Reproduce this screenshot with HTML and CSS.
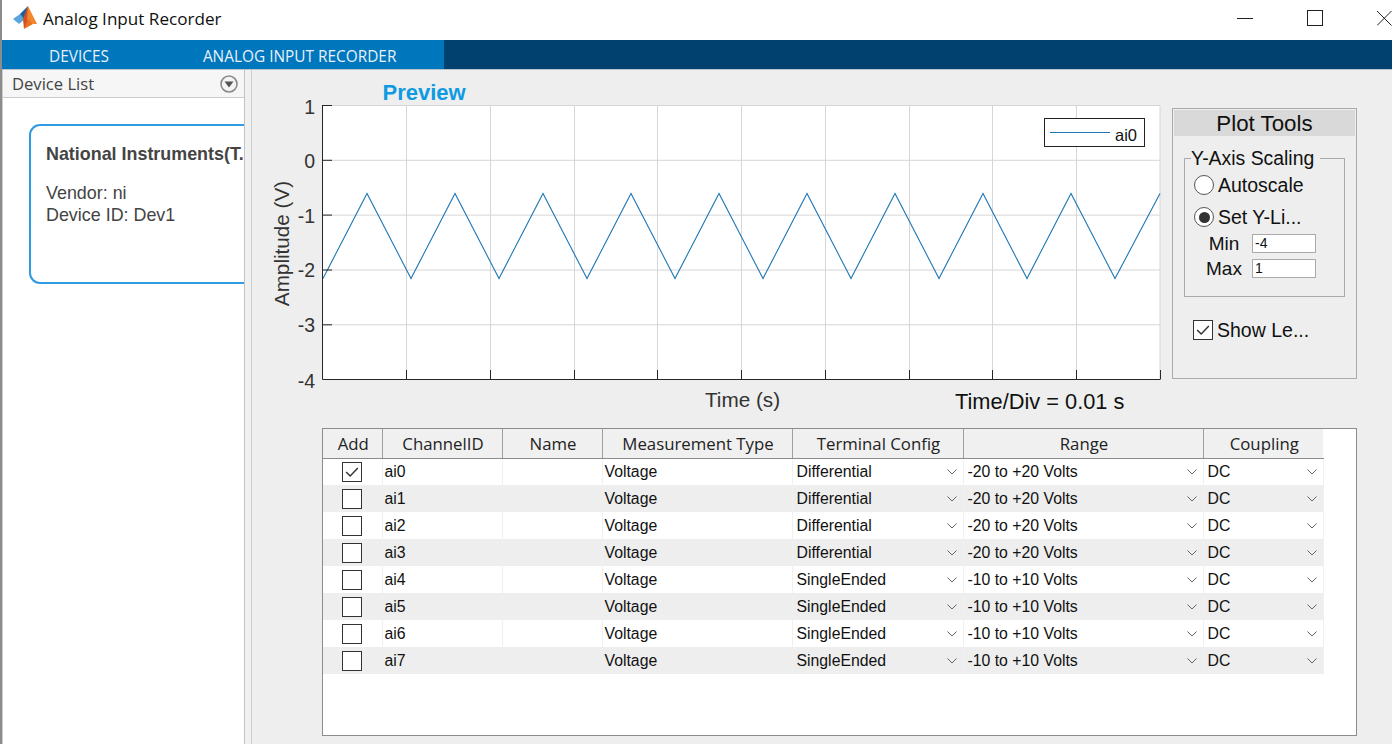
FILE: index.html
```html
<!DOCTYPE html>
<html lang="en">

<head>
    <meta charset="UTF-8">
    <title>Analog Input Recorder</title>
    <link rel="stylesheet" href="styles.css">
</head>

<body>
<svg class="defs">
    <symbol id="tick" viewBox="0 0 20 20"><path d="M3.5 10 L8 14.5 L16.5 5.5" fill="none" stroke="#333" stroke-width="1.6"/></symbol>
    <symbol id="chev" viewBox="0 0 12 8"><path d="M1.5 1.5 L6 6 L10.5 1.5" fill="none" stroke="#666" stroke-width="1"/></symbol>
</svg>

<div class="window">
    <div class="titlebar">
        <svg class="logo" viewBox="0 0 26 26" width="26" height="26">
            <path d="M1 15 L8 10 L13 15 L7 20 Z" fill="#5aa6dc"/>
            <path d="M8 10 L16 2 L13 16 Z" fill="#1d5f9c"/>
            <path d="M16 2 L11 15 L12 25 L17 17 Z" fill="#d2501f"/>
            <path d="M16 2 L25 20 L21 20 L15 16 Z" fill="#f0872c"/>
            <path d="M12 25 L16 15 L21 20 Z" fill="#e8701f"/>
        </svg>
        <span class="app-name">Analog Input Recorder</span>
        <div class="win-btns">
            <svg width="16" height="16" viewBox="0 0 16 16"><path d="M0 8.5 H16" stroke="#222"/></svg>
            <svg width="16" height="16" viewBox="0 0 16 16"><rect x="0.5" y="0.5" width="15" height="15" fill="none" stroke="#222"/></svg>
            <svg width="15" height="16" viewBox="0 0 15 16"><path d="M0 1 L14.5 15.5 M14.5 1 L0 15.5" stroke="#222"/></svg>
        </div>
    </div>

    <div class="tabbar">
        <div class="tabs">
            <div class="tab">DEVICES</div>
            <div class="tab">ANALOG INPUT RECORDER</div>
        </div>
    </div>

    <div class="content">
        <div class="sidebar">
            <div class="side-head">
                <span>Device List</span>
                <svg width="18" height="18" viewBox="0 0 18 18">
                    <circle cx="9" cy="9" r="8" fill="#f4f4f4" stroke="#8a8a8a" stroke-width="1.6"/>
                    <path d="M4.5 6.5 H13.5 L9 12.5 Z" fill="#555"/>
                </svg>
            </div>
            <div class="card">
                <h3>National Instruments(T...</h3>
                <p>Vendor: ni</p>
                <p>Device ID: Dev1</p>
            </div>
        </div>

        <div class="main">
            <div class="top-row">
                <svg class="plot" width="921" height="342" viewBox="251 78 921 342">
                    <text class="preview" x="382.5" y="100">Preview</text>

                    <rect x="323" y="105" width="837" height="274" fill="#fff"/>

                    <!-- grid -->
                    <path class="grid" d="M323 105.5 H1160 V379 M323 160.3 H1160 M323 215.1 H1160 M323 270 H1160 M323 324.8 H1160"/>
                    <path class="grid" d="M406.5 105 V379 M490.5 105 V379 M574.5 105 V379 M657.5 105 V379 M741.5 105 V379 M825.5 105 V379 M909.5 105 V379 M992.5 105 V379 M1076.5 105 V379"/>

                    <polyline class="wave" points="323,278.5 367,193.5 411,278.5 455,193.5 499,278.5 543,193.5 587,278.5 631,193.5 675,278.5 719,193.5 763,278.5 807,193.5 851,278.5 895,193.5 939,278.5 983,193.5 1027,278.5 1071,193.5 1115,278.5 1160,193.5"/>

                    <!-- axes -->
                    <path class="axis" d="M322.5 105 V379.5 H1160.5"/>
                    <path class="axis" d="M323 105.5 h9 M323 160.3 h9 M323 215.1 h9 M323 270 h9 M323 324.8 h9"/>
                    <path class="axis" d="M406.5 379 v-9 M490.5 379 v-9 M574.5 379 v-9 M657.5 379 v-9 M741.5 379 v-9 M825.5 379 v-9 M909.5 379 v-9 M992.5 379 v-9 M1076.5 379 v-9 M1160.5 379 v-9"/>

                    <g class="ticks">
                        <text x="315" y="114">1</text>
                        <text x="315" y="168">0</text>
                        <text x="315" y="223">-1</text>
                        <text x="315" y="277">-2</text>
                        <text x="315" y="332">-3</text>
                        <text x="315" y="388">-4</text>
                    </g>
                    <text class="axis-label" transform="translate(289 243.5) rotate(-90)" text-anchor="middle">Amplitude (V)</text>
                    <text class="axis-label" x="742.5" y="407" text-anchor="middle">Time (s)</text>
                    <text class="time-div" x="955" y="409">Time/Div = 0.01 s</text>

                    <!-- legend -->
                    <rect class="legend" x="1044.5" y="118.5" width="100" height="28"/>
                    <path class="wave" d="M1050 132.5 H1110"/>
                    <text class="legend-text" x="1115" y="141">ai0</text>
                </svg>

                <div class="tools">
                    <div class="tools-head">Plot Tools</div>
                    <fieldset class="scaling">
                        <legend>Y-Axis Scaling</legend>
                        <div class="opt"><span class="radio"></span>Autoscale</div>
                        <div class="opt opt-second"><span class="radio on"></span>Set Y-Li...</div>
                        <div class="limit"><label>Min</label><div class="num">-4</div></div>
                        <div class="limit"><label>Max</label><div class="num">1</div></div>
                    </fieldset>
                    <div class="opt show-legend"><span class="check"><svg><use href="#tick"/></svg></span>Show Le...</div>
                </div>
            </div>

            <div class="table-box">
                <table>
                    <colgroup>
                        <col class="c-add"><col class="c-id"><col class="c-name"><col class="c-type"><col class="c-term"><col class="c-range"><col class="c-coup">
                    </colgroup>
                    <thead>
                    <tr><th>Add</th><th>ChannelID</th><th>Name</th><th>Measurement Type</th><th>Terminal Config</th><th>Range</th><th>Coupling</th></tr>
                    </thead>
                    <tbody>
                    <tr>
                        <td><span class="check"><svg><use href="#tick"/></svg></span></td><td>ai0</td><td></td><td>Voltage</td>
                        <td><div class="drop">Differential<svg><use href="#chev"/></svg></div></td>
                        <td><div class="drop">-20 to +20 Volts<svg><use href="#chev"/></svg></div></td>
                        <td><div class="drop">DC<svg><use href="#chev"/></svg></div></td>
                    </tr>
                    <tr>
                        <td><span class="check"></span></td><td>ai1</td><td></td><td>Voltage</td>
                        <td><div class="drop">Differential<svg><use href="#chev"/></svg></div></td>
                        <td><div class="drop">-20 to +20 Volts<svg><use href="#chev"/></svg></div></td>
                        <td><div class="drop">DC<svg><use href="#chev"/></svg></div></td>
                    </tr>
                    <tr>
                        <td><span class="check"></span></td><td>ai2</td><td></td><td>Voltage</td>
                        <td><div class="drop">Differential<svg><use href="#chev"/></svg></div></td>
                        <td><div class="drop">-20 to +20 Volts<svg><use href="#chev"/></svg></div></td>
                        <td><div class="drop">DC<svg><use href="#chev"/></svg></div></td>
                    </tr>
                    <tr>
                        <td><span class="check"></span></td><td>ai3</td><td></td><td>Voltage</td>
                        <td><div class="drop">Differential<svg><use href="#chev"/></svg></div></td>
                        <td><div class="drop">-20 to +20 Volts<svg><use href="#chev"/></svg></div></td>
                        <td><div class="drop">DC<svg><use href="#chev"/></svg></div></td>
                    </tr>
                    <tr>
                        <td><span class="check"></span></td><td>ai4</td><td></td><td>Voltage</td>
                        <td><div class="drop">SingleEnded<svg><use href="#chev"/></svg></div></td>
                        <td><div class="drop">-10 to +10 Volts<svg><use href="#chev"/></svg></div></td>
                        <td><div class="drop">DC<svg><use href="#chev"/></svg></div></td>
                    </tr>
                    <tr>
                        <td><span class="check"></span></td><td>ai5</td><td></td><td>Voltage</td>
                        <td><div class="drop">SingleEnded<svg><use href="#chev"/></svg></div></td>
                        <td><div class="drop">-10 to +10 Volts<svg><use href="#chev"/></svg></div></td>
                        <td><div class="drop">DC<svg><use href="#chev"/></svg></div></td>
                    </tr>
                    <tr>
                        <td><span class="check"></span></td><td>ai6</td><td></td><td>Voltage</td>
                        <td><div class="drop">SingleEnded<svg><use href="#chev"/></svg></div></td>
                        <td><div class="drop">-10 to +10 Volts<svg><use href="#chev"/></svg></div></td>
                        <td><div class="drop">DC<svg><use href="#chev"/></svg></div></td>
                    </tr>
                    <tr>
                        <td><span class="check"></span></td><td>ai7</td><td></td><td>Voltage</td>
                        <td><div class="drop">SingleEnded<svg><use href="#chev"/></svg></div></td>
                        <td><div class="drop">-10 to +10 Volts<svg><use href="#chev"/></svg></div></td>
                        <td><div class="drop">DC<svg><use href="#chev"/></svg></div></td>
                    </tr>
                    </tbody>
                </table>
            </div>
        </div>
    </div>
</div>
</body>
</html>
```

FILE: styles.css
```css
* {
    margin: 0;
    padding: 0;
    box-sizing: border-box;
}

html, body {
    width: 1392px;
    height: 744px;
    overflow: hidden;
    background: #fff;
}

body {
    font-family: "Liberation Sans", Arial, sans-serif;
    color: #111;
}

.defs {
    display: none;
}

.window {
    width: 100%;
    height: 100%;
    display: flex;
    flex-direction: column;
    border-left: 2px solid #8c8c8c;
}

/* title bar */
.titlebar {
    height: 40px;
    display: flex;
    align-items: center;
    padding-left: 10px;
    background: #fff;
}

.logo {
    margin: -6px 5px 0 0;
    filter: blur(0.4px);
}

.app-name {
    font-family: "Open Sans", sans-serif;
    font-size: 17.1px;
    margin-bottom: 4px;
}

.win-btns {
    margin-left: auto;
    margin-bottom: 5px;
    display: flex;
    gap: 54px;
}

/* tabs */
.tabbar {
    height: 30px;
    flex-shrink: 0;
    background: #00416f;
    border-bottom: 1px solid #b7c4cd;
}

.tabs {
    width: 442px;
    height: 29px;
    background: #0076bd;
    display: flex;
    padding-left: 47px;
    gap: 94px;
}

.tab {
    font-family: "Open Sans", sans-serif;
    font-size: 15.4px;
    line-height: 34px;
    color: #e6f1f8;
    white-space: nowrap;
}

/* body of the window */
.content {
    flex: 1;
    display: flex;
    min-height: 0;
    background: #f0f0f0;
}

.sidebar {
    width: 243px;
    flex-shrink: 0;
    background: #fff;
    border-left: 1px solid #ccc;
    border-right: 1px solid #c4c4c4;
    overflow: hidden;
}

.side-head {
    height: 28px;
    display: flex;
    align-items: center;
    justify-content: space-between;
    padding: 0 6px 0 9px;
    background: #f6f6f6;
    border-bottom: 1px solid #ccc;
    font-family: "Open Sans", sans-serif;
    font-size: 16.6px;
    color: #444;
}

.card {
    width: 300px;
    height: 160px;
    margin: 26px 0 0 26px;
    padding: 17px 15px;
    border: 2px solid #2f9be0;
    border-radius: 11px;
    color: #444;
    font-size: 17.9px;
    line-height: 22px;
    white-space: nowrap;
}

.card h3 {
    font-size: 17.9px;
    line-height: 23px;
    margin-bottom: 16px;
}

.main {
    flex: 1;
    margin-left: 6px;
    border-left: 1px solid #ccc;
    background: #eee;
    padding-top: 8px;
    min-width: 0;
}

.top-row {
    display: flex;
    align-items: flex-start;
    margin-left: -1px;
}

/* plot */
.plot {
    flex-shrink: 0;
    display: block;
}

.preview {
    font-size: 22px;
    font-weight: bold;
    fill: #0e9be2;
}

.grid {
    fill: none;
    stroke: #d6d6d6;
    stroke-width: 1;
}

.axis {
    fill: none;
    stroke: #262626;
    stroke-width: 1;
}

.wave {
    fill: none;
    stroke: #1f77b4;
    stroke-width: 1.1;
}

.ticks text {
    font-size: 19.5px;
    fill: #333;
    text-anchor: end;
}

.axis-label {
    font-size: 20.7px;
    fill: #333;
}

.time-div {
    font-size: 21.8px;
    fill: #111;
}

.legend {
    fill: #fff;
    stroke: #222;
}

.legend-text {
    font-size: 16.5px;
    fill: #111;
}

/* plot tools panel */
.tools {
    width: 185px;
    height: 271px;
    margin-top: 30px;
    padding: 1px;
    border: 1px solid #aaa;
}

.tools-head {
    height: 26px;
    line-height: 28px;
    text-align: center;
    font-size: 22.3px;
    background: #d9d9d9;
}

.scaling {
    width: 161px;
    height: 150px;
    margin: 11px 0 0 10px;
    padding: 5px 0 0 9px;
    border: 1px solid #aaa;
}

.scaling legend {
    font-size: 19.4px;
    line-height: 22px;
    margin-left: -3px;
    padding-right: 6px;
}

.opt {
    display: flex;
    align-items: center;
    gap: 4px;
    font-size: 19.5px;
    height: 22px;
    white-space: nowrap;
}

.opt-second {
    margin-top: 10px;
}

.radio {
    width: 20px;
    height: 20px;
    border: 1px solid #555;
    border-radius: 50%;
    background: #fff;
    display: flex;
    align-items: center;
    justify-content: center;
}

.radio.on::after {
    content: "";
    width: 11px;
    height: 11px;
    border-radius: 50%;
    background: #333;
}

.limit {
    display: flex;
    align-items: center;
    height: 19px;
    margin-top: 6px;
    font-size: 19px;
}

.limit label {
    width: 48px;
    margin: 0 4px 0 6px;
    text-align: center;
}

.num {
    width: 64px;
    height: 19px;
    line-height: 17px;
    padding-left: 2px;
    background: #fff;
    border: 1px solid #aaa;
    font-size: 14px;
}

.show-legend {
    margin: 22px 0 0 19px;
}

.check {
    display: inline-block;
    width: 20px;
    height: 20px;
    border: 1px solid #333;
    background: #fff;
    flex-shrink: 0;
}

.check svg {
    display: block;
    width: 18px;
    height: 18px;
}

/* channel table */
.table-box {
    width: 1035px;
    height: 308px;
    margin: 8px 0 0 70px;
    background: #fff;
    border: 1px solid #8c8c8c;
}

table {
    width: 1000px;
    table-layout: fixed;
    border-collapse: collapse;
    font-size: 15.8px;
}

.c-add { width: 59px; }
.c-id { width: 120px; }
.c-name { width: 100px; }
.c-type { width: 190px; }
.c-term { width: 171px; }
.c-range { width: 240px; }
.c-coup { width: 120px; }

th {
    height: 29px;
    padding: 1px 0 0 2px;
    font-family: "Open Sans", sans-serif;
    font-size: 16.8px;
    font-weight: 400;
    color: #222;
    background: #f0f0f0;
    border-right: 1px solid #a0a0a0;
    border-bottom: 1px solid #8c8c8c;
}

th:last-child {
    border-right: 0;
}

td {
    height: 27px;
    padding: 0 0 0 2px;
    border-right: 1px solid #f0f0f0;
    white-space: nowrap;
    overflow: hidden;
}

td:first-child {
    text-align: center;
    padding: 0;
}

td:first-child .check {
    display: block;
    margin: 0 auto;
}

tbody tr:nth-child(even) td {
    background: #eee;
}

.drop {
    display: flex;
    align-items: center;
    justify-content: space-between;
    padding: 0 5px 0 2px;
}

.drop svg {
    width: 12px;
    height: 8px;
}
```
